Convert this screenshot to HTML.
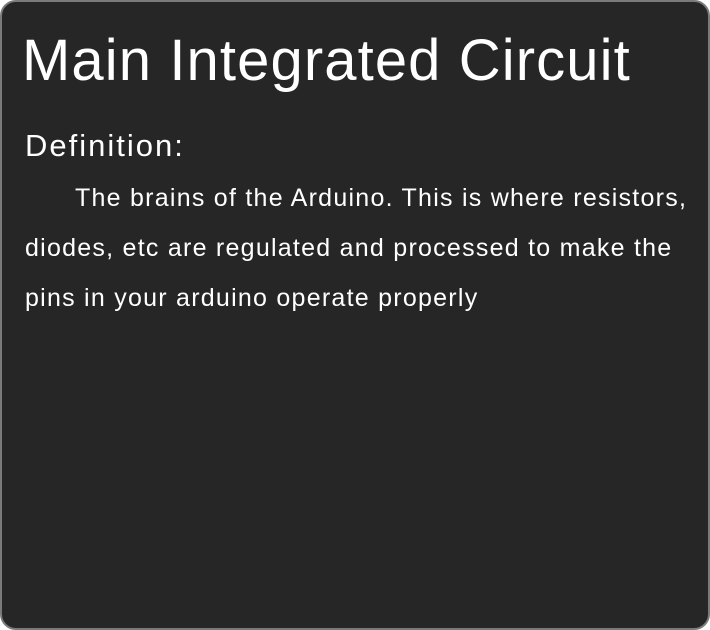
<!DOCTYPE html>
<html><head><style>
html,body{margin:0;padding:0;background:#fff;}
.card{position:absolute;left:0;top:0;width:706px;height:626px;background:#262626;border:2px solid #7a7a7a;border-radius:16px;font-family:"Liberation Sans",Arial,sans-serif;color:#fff;}
h1{position:absolute;left:20px;top:22px;margin:0;font-weight:normal;font-size:58px;letter-spacing:1.1px;line-height:74px;white-space:nowrap;}
.def{position:absolute;left:23px;top:126px;font-size:31px;letter-spacing:2px;line-height:36px;}
.body{position:absolute;left:23px;top:171px;width:685px;font-size:25px;letter-spacing:1.25px;line-height:50px;text-indent:50px;}
</style></head><body>
<div class="card">
<h1>Main Integrated Circuit</h1>
<div class="def">Definition:</div>
<div class="body">The brains of the Arduino. This is where resistors, diodes, etc are regulated and processed to make the pins in your arduino operate properly</div>
</div>
</body></html>
